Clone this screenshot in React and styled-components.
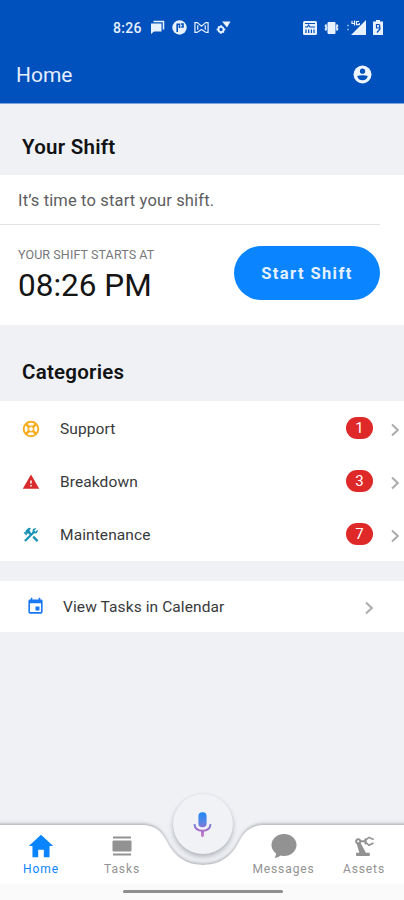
import React from 'react';
import styled, { createGlobalStyle } from 'styled-components';
import { MdConstruction, MdEvent, MdPrecisionManufacturing, MdWarning } from 'react-icons/md';
import { IoMdHome } from 'react-icons/io';

const GlobalStyle = createGlobalStyle`
  :root {
    --brand-color: #0050bd;
    --main-color: #0a84ff;
    --page-color: #eff1f5;
    --badge-color: #df2828;
    --muted-color: #929292;
  }

  * {
    box-sizing: border-box;
    margin: 0;
    padding: 0;
  }

  body {
    font-family: Roboto, 'Liberation Sans', sans-serif;
    background-color: var(--page-color);
  }
`;

const Screen = styled.div`
  width: 404px;
  height: 900px;
  display: flex;
  flex-direction: column;
  overflow: hidden;
  background-color: var(--page-color);
`;

const StatusBar = styled.div`
  height: 46px;
  padding: 9px 21px 0 113px;
  display: flex;
  align-items: center;
  justify-content: space-between;
  background-color: var(--brand-color);
  color: #e8f1ff;
`;

const StatusGroup = styled.div`
  display: flex;
  align-items: center;
  gap: 7px;

  svg {
    display: block;
  }
`;

const Clock = styled.span`
  width: 30px;
  font-size: 14px;
  font-weight: 500;
  letter-spacing: 0.3px;
`;

const Header = styled.header`
  height: 58px;
  padding: 0 32px 0 16px;
  display: flex;
  align-items: center;
  justify-content: space-between;
  background-color: var(--brand-color);
  border-bottom: 1px solid #7fa5dc;

  h1 {
    font-size: 21px;
    font-weight: 400;
    color: #e4eeff;
  }
`;

const SectionTitle = styled.h2`
  height: ${(props) => props.$height}px;
  padding: ${(props) => props.$top}px 0 0 22px;
  font-size: 20.5px;
  line-height: 24px;
  font-weight: 600;
  letter-spacing: 0.25px;
  color: #111214;
`;

const ShiftCard = styled.section`
  height: 150px;
  background-color: #fff;
`;

const ShiftMessage = styled.p`
  height: 50px;
  margin-right: 24px;
  padding-left: 18px;
  border-bottom: 1px solid #e2e3e5;
  font-size: 16.5px;
  line-height: 51px;
  letter-spacing: 0.15px;
  color: #5d5d5f;
`;

const ShiftRow = styled.div`
  padding: 21px 24px 0 18px;
  display: flex;
  justify-content: space-between;
`;

const ShiftTime = styled.div`
  small {
    display: block;
    padding-top: 2px;
    font-size: 12.5px;
    line-height: 14px;
    letter-spacing: 0.1px;
    color: #77787a;
  }

  strong {
    display: block;
    font-size: 31.5px;
    line-height: 47px;
    font-weight: 400;
    color: #151515;
  }
`;

const StartButton = styled.button`
  width: 146px;
  height: 54px;
  border: none;
  border-radius: 27px;
  background-color: var(--main-color);
  font-family: inherit;
  font-size: 16.5px;
  font-weight: 700;
  letter-spacing: 1.4px;
  color: #e4f1ff;
`;

const CategoryList = styled.ul`
  height: 160px;
  padding-top: 1px;
  list-style: none;
  background-color: #fff;
`;

const CategoryItem = styled.li`
  height: 53px;
  padding: 0 3px 0 22px;
  display: flex;
  align-items: center;
`;

const IconSlot = styled.span`
  width: ${(props) => props.$width}px;
  display: flex;
  color: ${(props) => props.color};
`;

const ItemLabel = styled.span`
  flex: 1;
  font-size: 15.5px;
  letter-spacing: 0.1px;
  color: #38393b;
`;

const Badge = styled.span`
  width: 27px;
  height: 22px;
  margin: 0 16px 1px 0;
  border-radius: 11px;
  background-color: var(--badge-color);
  font-size: 15px;
  line-height: 23px;
  text-align: center;
  color: #fff;
`;

const Chevron = styled.svg`
  width: 12px;
  height: 14px;
  margin-top: 3px;
  fill: none;
  stroke: #ababad;
  stroke-width: 2;
`;

const CalendarLink = styled.div`
  height: 51px;
  margin-top: 20px;
  padding: 0 29px 0 26px;
  display: flex;
  align-items: center;
  background-color: #fff;
`;

const Footer = styled.footer`
  position: relative;
  height: 76px;
  margin-top: auto;
`;

const FooterShape = styled.svg`
  position: absolute;
  left: 0;
  bottom: 0;
  display: block;
`;

const TabBar = styled.nav`
  position: relative;
  height: 60px;
  display: grid;
  grid-template-columns: 82px 80px 81px 81px 80px;
`;

const Tab = styled.div`
  padding-top: 9px;
  display: flex;
  flex-direction: column;
  align-items: center;
  white-space: nowrap;
  color: ${(props) => (props.$active ? 'var(--main-color)' : 'var(--muted-color)')};

  span {
    margin-top: 3px;
    font-size: 12px;
    line-height: 14px;
    letter-spacing: 0.9px;
  }
`;

const TabIcon = styled.div`
  height: 26px;
  display: flex;
  align-items: center;
  justify-content: center;
`;

const MicButton = styled.button`
  position: absolute;
  left: 173px;
  top: -30px;
  width: 60px;
  height: 60px;
  padding-right: 2px;
  display: flex;
  align-items: center;
  justify-content: center;
  border: none;
  border-radius: 50%;
  background-color: #f1f2f6;
  box-shadow: 0 3px 5px rgba(70, 75, 85, 0.34), 0 0 2px rgba(70, 75, 85, 0.1);
`;

const HomeIndicator = styled.div`
  position: relative;
  width: 160px;
  height: 3px;
  margin: 6px 0 0 123px;
  border-radius: 2px;
  background-color: #8e8e8e;
`;

function NotificationIcons() {
  return (
    <>
      <svg width="15" height="15" viewBox="0 0 15 15">
        <path d="M3.5 1.5h10v8" fill="none" stroke="currentColor" strokeWidth="1.5" />
        <path d="M1 3.5h10.5v8H4L1 14z" fill="currentColor" />
      </svg>
      <svg width="15" height="15" viewBox="0 0 15 15">
        <circle cx="7.5" cy="7.5" r="7.2" fill="currentColor" />
        <path d="M5.2 12V4.3h2.300V8M9 4h2v3H9.200" fill="none" stroke="var(--brand-color)" strokeWidth="1.6" />
      </svg>
      <svg width="15" height="13" viewBox="0 0 16 13" fill="none" stroke="currentColor" strokeWidth="1.3">
        <path d="M1 1.2h2.500L8 5l4.500-3.800H15v10.600h-2.200L8 8.500l-4.800 3.300H1zM4 4v5M12 4v5" />
      </svg>
      <svg width="15" height="15" viewBox="0 0 15 15">
        <path d="M6 1.5h8.500L11 7.500z" fill="currentColor" />
        <circle cx="5" cy="9.5" r="2.6" fill="none" stroke="currentColor" strokeWidth="1.9" />
        <path d="M5 5v2M5 12v2M.6 9.500h2M7.400 9.500h2M2 6.500l1.200 1.200M8 12.500l-1.200-1.200" stroke="currentColor" strokeWidth="1.4" />
      </svg>
    </>
  );
}

function SystemIcons() {
  return (
    <>
      <svg width="14" height="14" viewBox="0 0 14 14">
        <rect width="14" height="14" rx="1.5" fill="currentColor" />
        <path d="M2 2.500h10M2 6h2.500l1-2 1.500 2h5" fill="none" stroke="var(--brand-color)" strokeWidth="1.1" />
        <path d="M3 8.500v3.500M5.700 8.500v3.500M8.400 8.500v3.500M11 8.500v3.500" stroke="var(--brand-color)" strokeWidth="1.2" />
      </svg>
      <svg width="15" height="14" viewBox="0 0 15 14">
        <rect x="3.5" y="1" width="8" height="12" rx="1" fill="currentColor" />
        <path d="M2.500 3.500 1.500 5l1 1.500-1 1.500 1 1.500M12.500 3.500l1 1.500-1 1.500 1 1.500-1 1.500" fill="none" stroke="currentColor" strokeWidth="1.7" />
      </svg>
      <svg width="20" height="15" viewBox="0 0 20 15">
        <path d="M20 0v15H5z" fill="currentColor" />
        <path d="M6 1v2.500h3M8.500.5v5M13 1.500h-2.500v3.200h2.800V3" fill="none" stroke="currentColor" strokeWidth="1.2" />
        <path d="M1 5.500h2M1 9.500h2" stroke="#7da7e4" strokeWidth="1.5" />
      </svg>
      <svg width="10" height="15" viewBox="0 0 10 15">
        <path d="M3 0h4v1.500h3V15H0V1.500h3z" fill="currentColor" />
        <path d="M6.500 4.500h-3v3.500h3v-3.500L7 9l-3 3.500" fill="none" stroke="var(--brand-color)" strokeWidth="1.2" />
      </svg>
    </>
  );
}

function AccountIcon() {
  return (
    <svg width="19" height="19" viewBox="0 0 19 19">
      <circle cx="9.5" cy="9.5" r="9" fill="#eef5ff" />
      <circle cx="9.5" cy="6.2" r="2.6" fill="var(--brand-color)" />
      <path d="M4.300 11c1.500-.6 3.200-.8 5.200-.8s3.700.2 5.200.8c-.4 2.800-2.400 4.200-5.200 4.200S4.700 13.800 4.300 11z" fill="var(--brand-color)" />
    </svg>
  );
}

function SupportIcon() {
  return (
    <svg width="18" height="18" viewBox="0 0 18 18" fill="none" stroke="currentColor">
      <circle cx="9" cy="9" r="7.3" strokeWidth="1.9" />
      <path d="m3.800 3.800 10.400 10.400M14.200 3.800 3.800 14.200" strokeWidth="2.6" />
      <circle cx="9" cy="9" r="2.9" strokeWidth="1.1" />
      <circle cx="9" cy="9" r="1.9" fill="#fff" stroke="none" />
    </svg>
  );
}

function ArrowRight() {
  return (
    <Chevron viewBox="0 0 12 14">
      <path d="M3 1.500 8.800 7 3 12.500" />
    </Chevron>
  );
}

function TasksIcon() {
  return (
    <svg width="20" height="20" viewBox="0 0 20 20" fill="currentColor">
      <rect x="1" y="0.5" width="18" height="2" />
      <rect x="0.5" y="4.5" width="19" height="11" rx="1" />
      <rect x="1" y="17.5" width="18" height="2" />
    </svg>
  );
}

function MessagesIcon() {
  return (
    <svg width="26" height="26" viewBox="0 0 26 26" fill="currentColor">
      <ellipse cx="13" cy="12" rx="12.5" ry="11" />
      <path d="M5 18c.5 3-.2 5-1.500 7 3.500-.3 5.500-1.800 7-4z" />
    </svg>
  );
}

function MicIcon() {
  return (
    <svg width="19" height="27" viewBox="0 0 20 28">
      <defs>
        <linearGradient id="mic" gradientUnits="userSpaceOnUse" x1="0" y1="0" x2="0" y2="28">
          <stop offset="0" stopColor="#1b87f5" />
          <stop offset="0.4" stopColor="#5486e6" />
          <stop offset="0.7" stopColor="#a26bca" />
          <stop offset="1" stopColor="#cf7bc1" />
        </linearGradient>
      </defs>
      <rect x="5.7" y="1" width="8.6" height="16" rx="4" fill="url(#mic)" />
      <path d="M1.500 13.500c.5 4.500 4 7 8.500 7s8-2.500 8.500-7" fill="none" stroke="url(#mic)" strokeWidth="2" />
      <path d="M8.500 20.500h3V26L10 27.500 8.500 26z" fill="url(#mic)" />
    </svg>
  );
}

// tab bar surface with the notch under the mic button
function TabBarSurface() {
  const edge = 'M-5 7H140C156 7 162 14 167 24C174 38 186 47 203 47S232 38 239 24C244 14 250 7 266 7H409';

  return (
    <FooterShape width="404" height="82" viewBox="0 0 404 82">
      <defs>
        <filter id="edge" x="-5%" y="-20%" width="110%" height="140%">
          <feDropShadow dx="0" dy="-1.5" stdDeviation="1.5" floodColor="#6d7078" floodOpacity="0.5" />
        </filter>
      </defs>
      <path d={`${edge}V90H-5Z`} fill="#fff" filter="url(#edge)" />
      <rect y="66" width="404" height="16" fill="#fafafa" />
    </FooterShape>
  );
}

const categories = [
  { name: 'Support', count: 1, icon: <SupportIcon />, color: '#f6ac1c' },
  { name: 'Breakdown', count: 3, icon: <MdWarning size={18} />, color: '#d92b2b' },
  { name: 'Maintenance', count: 7, icon: <MdConstruction size={18} />, color: '#1792b4' },
];

const tabs = [
  { name: 'Home', icon: <IoMdHome size={30} />, active: true },
  { name: 'Tasks', icon: <TasksIcon /> },
  null,
  { name: 'Messages', icon: <MessagesIcon /> },
  { name: 'Assets', icon: <MdPrecisionManufacturing size={25} /> },
];

export default function App() {
  return (
    <>
      <GlobalStyle />
      <Screen>
        <StatusBar>
          <StatusGroup>
            <Clock>8:26</Clock>
            <NotificationIcons />
          </StatusGroup>
          <StatusGroup>
            <SystemIcons />
          </StatusGroup>
        </StatusBar>
        <Header>
          <h1>Home</h1>
          <AccountIcon />
        </Header>
        <SectionTitle $height={71} $top={31}>
          Your Shift
        </SectionTitle>
        <ShiftCard>
          <ShiftMessage>It’s time to start your shift.</ShiftMessage>
          <ShiftRow>
            <ShiftTime>
              <small>YOUR SHIFT STARTS AT</small>
              <strong>08:26 PM</strong>
            </ShiftTime>
            <StartButton>Start Shift</StartButton>
          </ShiftRow>
        </ShiftCard>
        <SectionTitle $height={76} $top={35}>
          Categories
        </SectionTitle>
        <CategoryList>
          {categories.map((category) => (
            <CategoryItem key={category.name}>
              <IconSlot $width={38} color={category.color}>
                {category.icon}
              </IconSlot>
              <ItemLabel>{category.name}</ItemLabel>
              <Badge>{category.count}</Badge>
              <ArrowRight />
            </CategoryItem>
          ))}
        </CategoryList>
        <CalendarLink>
          <IconSlot $width={37} color="#1877f2">
            <MdEvent size={19} />
          </IconSlot>
          <ItemLabel>View Tasks in Calendar</ItemLabel>
          <ArrowRight />
        </CalendarLink>
        <Footer>
          <TabBarSurface />
          <TabBar>
            {tabs.map((tab) =>
              tab ? (
                <Tab key={tab.name} $active={tab.active}>
                  <TabIcon>{tab.icon}</TabIcon>
                  <span>{tab.name}</span>
                </Tab>
              ) : (
                <div key="notch" />
              )
            )}
          </TabBar>
          <HomeIndicator />
          <MicButton>
            <MicIcon />
          </MicButton>
        </Footer>
      </Screen>
    </>
  );
}
